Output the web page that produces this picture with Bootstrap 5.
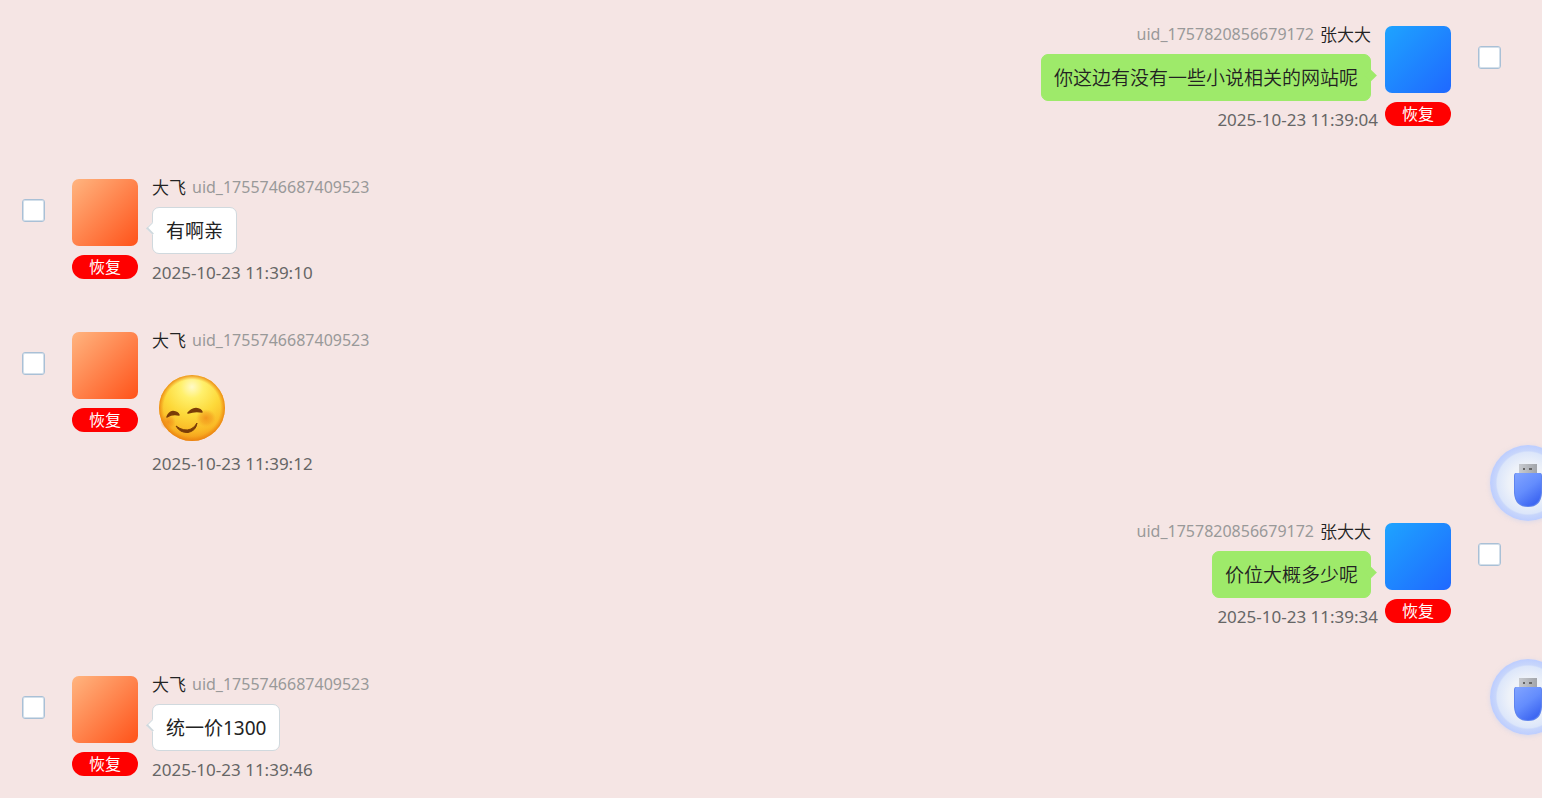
<!DOCTYPE html>
<html lang="zh-CN">
<head>
<meta charset="utf-8">
<meta name="viewport" content="width=device-width, initial-scale=1">
<title>聊天记录</title>
<link href="https://cdn.jsdelivr.net/npm/bootstrap@5.3.0/dist/css/bootstrap.min.css" rel="stylesheet">
<style>
body{background:#f5e5e4;color:#222;font-family:"Noto Sans","Noto Sans CJK SC",sans-serif;font-size:16px;line-height:24px}
.chat{padding:22px 41px 0 22px;gap:43px}
.msg{gap:27px}
.msg-main{gap:14px}
.pick.form-check-input{width:23px;height:23px;margin:24px 0 0;border:1px solid #a9c0d6;border-radius:3px;background-color:#fff;box-shadow:inset 0 0 0 1px #d3dfea}
.side{width:66px;padding-top:4px;gap:9px}
.avatar{height:67px;border-radius:7px}
.avatar-fei{background:linear-gradient(135deg,#ffb580,#ff5219)}
.avatar-zhang{background:linear-gradient(135deg,#1ea4ff,#1f68ff)}
.restore{height:24px;border-radius:12px;background:#f00;color:#fff;font-size:16px;line-height:24px}
.name{font-size:17px;font-weight:350;font-family:"Noto Sans CJK SC",sans-serif}
.uid{color:#999}
.who{gap:6px;margin-bottom:8px}
.bubble{position:relative;padding:10px 13px 8px;border:1px solid #d0d9de;border-radius:7px;background:#fff;font-size:19px;line-height:27px}
.bubble::before{content:"";position:absolute;width:9px;height:9px;left:-5px;top:16px;background:#fff;border:solid #d0d9de;border-width:0 0 2px 1px;transform:rotate(45deg)}
.mine .bubble{padding-left:12px;padding-right:12px;font-weight:350;background:#9eea6a;border-color:#9eea6a}
.mine .bubble::before{left:auto;right:-5px;background:#9eea6a;border:0}
.sent-at{color:#666;font-size:17px;margin-top:7px}
.mine .sent-at{margin-right:-7px}
.sticker{height:85px;padding:15px 6px 2px}
.float-btn{right:-24px;width:76px;height:76px;border-radius:50%;background:radial-gradient(closest-side,#f2f4f9 0,#eef2f9 50%,#dce6fa 81%,#c8d6fb 85%,#bccdff 100%);box-shadow:0 1px 4px #bfcdf080}
.disk-a{top:445px}
.disk-b{top:659px}
.float-btn svg{position:absolute;left:20px;top:16px}
</style>
</head>
<body>
<main class="chat d-flex flex-column">
  <article class="msg mine d-flex flex-row-reverse align-items-start">
    <input class="pick form-check-input flex-shrink-0" type="checkbox" aria-label="选择消息">
    <div class="msg-main d-flex flex-row-reverse">
      <div class="side d-flex flex-column"><div class="avatar avatar-zhang"></div><button class="restore border-0 p-0">恢复</button></div>
      <div class="d-flex flex-column align-items-end">
        <div class="who d-flex"><span class="uid">uid_1757820856679172</span><span class="name">张大大</span></div>
        <div class="bubble">你这边有没有一些小说相关的网站呢</div>
        <time class="sent-at">2025-10-23 11:39:04</time>
      </div>
    </div>
  </article>
  <article class="msg d-flex align-items-start">
    <input class="pick form-check-input flex-shrink-0" type="checkbox" aria-label="选择消息">
    <div class="msg-main d-flex">
      <div class="side d-flex flex-column"><div class="avatar avatar-fei"></div><button class="restore border-0 p-0">恢复</button></div>
      <div class="d-flex flex-column align-items-start">
        <div class="who d-flex"><span class="name">大飞</span><span class="uid">uid_1755746687409523</span></div>
        <div class="bubble">有啊亲</div>
        <time class="sent-at">2025-10-23 11:39:10</time>
      </div>
    </div>
  </article>
  <article class="msg d-flex align-items-start">
    <input class="pick form-check-input flex-shrink-0" type="checkbox" aria-label="选择消息">
    <div class="msg-main d-flex">
      <div class="side d-flex flex-column"><div class="avatar avatar-fei"></div><button class="restore border-0 p-0">恢复</button></div>
      <div class="d-flex flex-column align-items-start">
        <div class="who d-flex"><span class="name">大飞</span><span class="uid">uid_1755746687409523</span></div>
        <div class="sticker">
          <svg class="d-block" width="68" height="68" viewBox="0 0 68 68" role="img" aria-label="微笑">
            <defs>
              <radialGradient id="face" cx=".5" cy=".18" r=".86"><stop offset="0" stop-color="#fffac8"/><stop offset=".2" stop-color="#fff06c"/><stop offset=".5" stop-color="#fdd93a"/><stop offset=".78" stop-color="#fab926"/><stop offset="1" stop-color="#f08a14"/></radialGradient>
              <radialGradient id="blush"><stop offset="0" stop-color="#ee7a12" stop-opacity=".65"/><stop offset=".6" stop-color="#f08a18" stop-opacity=".4"/><stop offset="1" stop-color="#f59a20" stop-opacity="0"/></radialGradient>
              <radialGradient id="rim"><stop offset=".86" stop-color="#ee8a10" stop-opacity="0"/><stop offset="1" stop-color="#e97e10" stop-opacity=".85"/></radialGradient>
            </defs>
            <circle cx="34" cy="33" r="33" fill="url(#face)"/>
            <ellipse cx="48" cy="43" rx="10" ry="9" fill="url(#blush)"/>
            <ellipse cx="10" cy="47" rx="8" ry="8" fill="url(#blush)"/>
            <circle cx="34" cy="33" r="33" fill="url(#rim)"/>
            <path d="M9 42Q11 37 15 36.500Q20 37 21 40Q14 38.500 9 42Z" fill="#7a3c08" stroke="#7a3c08" stroke-width="1.500" stroke-linejoin="round"/>
            <path d="M30 38Q33 34 38 33.500Q43 34 44 37Q37 35.500 30 38Z" fill="#7a3c08" stroke="#7a3c08" stroke-width="1.500" stroke-linejoin="round"/>
            <path d="M18 51Q26 57 33 54Q37 52 39 48Q38 56 30 57.500Q22 58 18 51Z" fill="#7a3c08" stroke="#7a3c08" stroke-linejoin="round"/>
          </svg>
        </div>
        <time class="sent-at">2025-10-23 11:39:12</time>
      </div>
    </div>
  </article>
  <article class="msg mine d-flex flex-row-reverse align-items-start">
    <input class="pick form-check-input flex-shrink-0" type="checkbox" aria-label="选择消息">
    <div class="msg-main d-flex flex-row-reverse">
      <div class="side d-flex flex-column"><div class="avatar avatar-zhang"></div><button class="restore border-0 p-0">恢复</button></div>
      <div class="d-flex flex-column align-items-end">
        <div class="who d-flex"><span class="uid">uid_1757820856679172</span><span class="name">张大大</span></div>
        <div class="bubble">价位大概多少呢</div>
        <time class="sent-at">2025-10-23 11:39:34</time>
      </div>
    </div>
  </article>
  <article class="msg d-flex align-items-start">
    <input class="pick form-check-input flex-shrink-0" type="checkbox" aria-label="选择消息">
    <div class="msg-main d-flex">
      <div class="side d-flex flex-column"><div class="avatar avatar-fei"></div><button class="restore border-0 p-0">恢复</button></div>
      <div class="d-flex flex-column align-items-start">
        <div class="who d-flex"><span class="name">大飞</span><span class="uid">uid_1755746687409523</span></div>
        <div class="bubble">统一价1300</div>
        <time class="sent-at">2025-10-23 11:39:46</time>
      </div>
    </div>
  </article>
</main>
<button class="float-btn disk-a position-fixed border-0 p-0" aria-label="网盘">
  <svg width="36" height="50" viewBox="0 0 36 50" aria-hidden="true">
    <defs>
      <linearGradient id="usb" x1="0" y1="0" x2=".6" y2="1"><stop offset="0" stop-color="#82a4ff"/><stop offset=".55" stop-color="#648dfd"/><stop offset="1" stop-color="#3e67f2"/></linearGradient>
      <linearGradient id="plug"><stop offset="0" stop-color="#c8cbd0"/><stop offset="1" stop-color="#a2a5aa"/></linearGradient>
    </defs>
    <path d="M9 3h18v10H9z" fill="url(#plug)"/><path d="M13 7h2v2h-2zM19 7h3v2h-3z" fill="#666"/>
    <path d="M6 12h24q2 0 2 3v17q-1 14-14 14T4 32V15q0-3 2-3Z" fill="#5f84ee"/>
    <path d="M7 12h22q2 0 2 3v16q-1 14-13 14T5 31V15q0-3 2-3Z" fill="url(#usb)"/>
  </svg>
</button>
<button class="float-btn disk-b position-fixed border-0 p-0" aria-label="网盘">
  <svg width="36" height="50" viewBox="0 0 36 50" aria-hidden="true">
    <path d="M9 3h18v10H9z" fill="url(#plug)"/><path d="M13 7h2v2h-2zM19 7h3v2h-3z" fill="#666"/>
    <path d="M6 12h24q2 0 2 3v17q-1 14-14 14T4 32V15q0-3 2-3Z" fill="#5f84ee"/>
    <path d="M7 12h22q2 0 2 3v16q-1 14-13 14T5 31V15q0-3 2-3Z" fill="url(#usb)"/>
  </svg>
</button>
<script src="https://cdn.jsdelivr.net/npm/bootstrap@5.3.0/dist/js/bootstrap.bundle.min.js"></script>
</body>
</html>
